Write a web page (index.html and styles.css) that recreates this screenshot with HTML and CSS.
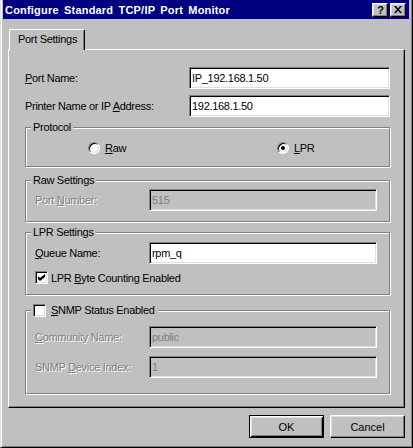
FILE: index.html
```html
<!DOCTYPE html>
<html>
<head>
<meta charset="utf-8">
<link rel="stylesheet" href="styles.css">
</head>
<body>
<div class="window">
  <div class="titlebar">
    <span class="title">Configure Standard TCP/IP Port Monitor</span>
    <div class="tbtns">
      <div class="tbtn help">?</div>
      <div class="tbtn close"><svg width="8" height="7" viewBox="0 0 8 7"><path d="M0 0h2l2 2.4 2-2.4h2L5 3.5 8 7H6L4 4.6 2 7H0l3-3.5z" fill="#000"/></svg></div>
    </div>
  </div>
  <div class="content">
    <div class="tabs"><div class="tab">Port Settings</div></div>
    <div class="panel">
      <div class="row">
        <div class="lbl"><u>P</u>ort Name:</div>
        <div class="field">IP_192.168.1.50</div>
      </div>
      <div class="row row2">
        <div class="lbl">Printer Name or IP <u>A</u>ddress:</div>
        <div class="field">192.168.1.50</div>
      </div>

      <div class="group proto">
        <div class="legend">Protocol</div>
        <div class="opt first"><span class="radio"></span><span><u>R</u>aw</span></div>
        <div class="opt"><span class="radio on"><span class="dot"></span></span><span><u>L</u>PR</span></div>
      </div>

      <div class="group raw">
        <div class="legend">Raw Settings</div>
        <div class="grow">
          <div class="lbl dis">Port <u>N</u>umber:</div>
          <div class="field off">515</div>
        </div>
      </div>

      <div class="group lpr">
        <div class="legend">LPR Settings</div>
        <div class="grow">
          <div class="lbl"><u>Q</u>ueue Name:</div>
          <div class="field">rpm_q</div>
        </div>
        <div class="check-row">
          <span class="check"><svg width="7" height="7" viewBox="0 0 7 7"><path d="M0 2l2 2 5-4v3L2 7 0 5z" fill="#000"/></svg></span>
          <span>LPR <u>B</u>yte Counting Enabled</span>
        </div>
      </div>

      <div class="group snmp">
        <div class="legend check-legend"><span class="check"></span><span><u>S</u>NMP Status Enabled</span></div>
        <div class="grow">
          <div class="lbl dis"><u>C</u>ommunity Name:</div>
          <div class="field off">public</div>
        </div>
        <div class="grow g2">
          <div class="lbl dis">SNMP <u>D</u>evice Index:</div>
          <div class="field off">1</div>
        </div>
      </div>
    </div>
    <div class="buttons">
      <div class="btn default">OK</div>
      <div class="btn">Cancel</div>
    </div>
  </div>
</div>
</body>
</html>
```
FILE: styles.css
```css
html, body {
  margin: 0;
  padding: 0;
  background: #c0c0c0;
}

.window {
  width: 413px;
  height: 448px;
  box-sizing: border-box;
  background: #c0c0c0;
  border-left: 1px solid #dfdfdf;
  border-right: 1px solid #000;
  border-bottom: 1px solid #000;
  box-shadow: inset 1px 0 #fff, inset -1px -1px #808080;
  padding: 0 3px 0 2px;
  display: flex;
  flex-direction: column;
  font-family: "Liberation Sans", Arial, sans-serif;
  font-size: 11px;
  letter-spacing: -0.3px;
  color: #000;
}

.titlebar {
  height: 19px;
  background: #000080;
  display: flex;
  align-items: center;
  justify-content: space-between;
  padding: 0 3px 0 2px;
}

.title {
  color: #fff;
  font-weight: bold;
  font-size: 11px;
  letter-spacing: 0.2px;
  word-spacing: 2px;
}

.tbtns {
  display: flex;
  gap: 2px;
}

.tbtn {
  width: 16px;
  height: 14px;
  box-sizing: border-box;
  background: #c0c0c0;
  border-top: 1px solid #fff;
  border-left: 1px solid #fff;
  border-right: 1px solid #000;
  border-bottom: 1px solid #000;
  box-shadow: inset -1px -1px #808080, inset 1px 1px #dfdfdf;
  display: flex;
  align-items: center;
  justify-content: center;
  font-weight: bold;
  font-size: 11px;
  letter-spacing: 0;
  line-height: 12px;
}

.help {
  padding-left: 1px;
}

.close svg {
  display: block;
}

.content {
  display: flex;
  flex-direction: column;
  padding: 0 4px 0 5px;
}

.tabs {
  display: flex;
  margin-top: 10px;
  padding-left: 1px;
}

.tab {
  position: relative;
  z-index: 1;
  width: 76px;
  height: 21px;
  box-sizing: border-box;
  margin-bottom: -1px;
  background: #c0c0c0;
  border-top: 1px solid #fff;
  border-left: 1px solid #fff;
  border-right: 1px solid #000;
  border-radius: 2px 2px 0 0;
  box-shadow: inset -1px 0 #808080;
  padding: 1px 0 0 8px;
  line-height: 17px;
}

.panel {
  width: 397px;
  height: 359px;
  box-sizing: border-box;
  border-top: 1px solid #fff;
  border-left: 1px solid #fff;
  border-right: 1px solid #000;
  border-bottom: 1px solid #000;
  box-shadow: inset -1px -1px #808080;
  padding: 17px 0 0 16px;
}

.row {
  display: grid;
  grid-template-columns: 164px 201px;
  align-items: center;
  height: 22px;
  margin-bottom: 6px;
}

.row2 {
  margin-bottom: 10px;
}

.field {
  height: 22px;
  box-sizing: border-box;
  background: #fff;
  border-top: 1px solid #808080;
  border-left: 1px solid #808080;
  border-right: 1px solid #fff;
  border-bottom: 1px solid #fff;
  box-shadow: inset 1px 1px #000, inset -1px -1px #dfdfdf;
  padding: 0 0 0 2px;
  display: flex;
  align-items: center;
  white-space: nowrap;
}

.field.off {
  background: #c0c0c0;
  color: #808080;
}

.lbl {
  white-space: nowrap;
}

.lbl.dis {
  color: #808080;
  text-shadow: 1px 1px #fff;
}

.group {
  position: relative;
  width: 365px;
  box-sizing: border-box;
  border: 1px solid #808080;
  box-shadow: inset 1px 1px #fff, 1px 1px #fff;
}

.legend {
  position: absolute;
  top: -7px;
  left: 5px;
  padding: 0 2px;
  background: #c0c0c0;
  line-height: 13px;
  white-space: nowrap;
}

.check-legend {
  display: flex;
  align-items: center;
  gap: 5px;
  padding: 0 3px 0 2px;
}

.proto {
  height: 40px;
  display: flex;
  align-items: center;
  padding: 1px 0 0 62px;
}

.opt {
  flex: none;
  display: flex;
  align-items: center;
  gap: 5px;
}

.opt.first {
  width: 189px;
}

.radio {
  width: 12px;
  height: 12px;
  box-sizing: border-box;
  border-radius: 50%;
  background: #fff;
  border: 1px solid;
  border-color: #808080 #fff #fff #808080;
  box-shadow: inset 1px 1px #000, inset -1px -1px #dfdfdf;
  display: flex;
  align-items: center;
  justify-content: center;
}

.dot {
  width: 4px;
  height: 4px;
  border-radius: 50%;
  background: #000;
}

.raw {
  margin-top: 13px;
  height: 42px;
  padding: 8px 0 0 9px;
}

.lpr {
  margin-top: 10px;
  height: 63px;
  padding: 9px 0 0 9px;
}

.snmp {
  margin-top: 15px;
  height: 84px;
  padding: 15px 0 0 9px;
}

.grow {
  display: grid;
  grid-template-columns: 114px 228px;
  align-items: center;
  height: 22px;
}

.g2 {
  margin-top: 8px;
}

.check-row {
  display: flex;
  align-items: center;
  gap: 3px;
  margin-top: 7px;
}

.check {
  width: 13px;
  height: 13px;
  box-sizing: border-box;
  background: #fff;
  border: 1px solid;
  border-color: #808080 #fff #fff #808080;
  box-shadow: inset 1px 1px #000, inset -1px -1px #dfdfdf;
  display: flex;
  align-items: center;
  justify-content: center;
  flex: none;
}

.check svg {
  display: block;
}

.buttons {
  display: flex;
  justify-content: flex-end;
  gap: 6px;
  margin-top: 7px;
}

.btn {
  width: 75px;
  height: 23px;
  box-sizing: border-box;
  background: #c0c0c0;
  border-top: 1px solid #fff;
  border-left: 1px solid #fff;
  border-right: 1px solid #000;
  border-bottom: 1px solid #000;
  box-shadow: inset -1px -1px #808080, inset 1px 1px #dfdfdf;
  display: flex;
  align-items: center;
  justify-content: center;
  letter-spacing: 0;
}

.btn.default {
  border: 1px solid #000;
  box-shadow: inset 1px 1px #fff, inset -1px -1px #000, inset 2px 2px #dfdfdf, inset -2px -2px #808080;
}
```
